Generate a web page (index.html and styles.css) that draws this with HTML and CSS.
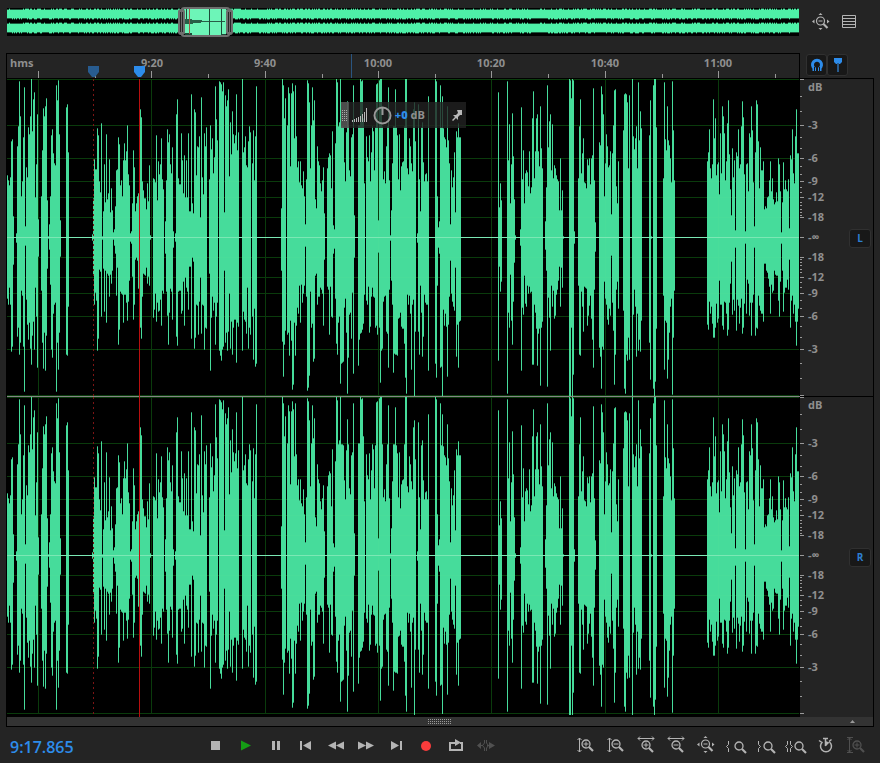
FILE: index.html
```html
<!DOCTYPE html>
<html lang="en">
<head>
<meta charset="utf-8">
<title>Waveform editor</title>
<link rel="stylesheet" href="styles.css">
</head>
<body>
<svg class="symbols" aria-hidden="true">
  <symbol id="lens" viewBox="0 0 13 13"><circle cx="5" cy="5" r="4" fill="none" stroke="currentColor" stroke-width="1.3"/><path d="M8 8l4 4" stroke="currentColor" stroke-width="2.2"/></symbol>
  <symbol id="vertical" viewBox="0 0 5 16"><path d="M2.5 1v14M.5 3l2-2 2 2M.5 13l2 2 2-2" fill="none" stroke="currentColor"/></symbol>
  <symbol id="horizontal" viewBox="0 0 18 5"><path d="M1 2.500h16M3 .5l-2 2 2 2M15 .5l2 2-2 2" fill="none" stroke="currentColor"/></symbol>
  <symbol id="full" viewBox="0 0 18 18"><circle cx="8.500" cy="8" r="4" fill="none" stroke="currentColor" stroke-width="1.200"/><path d="M11.500 11l4 4" stroke="currentColor" stroke-width="2.200"/><path d="M6.500 8h4" stroke="currentColor"/><path d="M8.500 0l2 2h-4zM8.500 17l-2-2h4zM0 8.500l2.500-2v4zM17.500 8.500l-2.500-2v4z" fill="currentColor"/></symbol>
</svg>

<header class="overview-row">
  <svg id="overview" class="overview" viewBox="0 0 793 32" preserveAspectRatio="none" role="img" aria-label="Overview"></svg>
  <div class="overview-tools">
    <button class="tool" aria-label="Zoom out full"><svg width="18" height="18"><use href="#full"/></svg></button>
    <button class="tool" aria-label="Show list"><svg width="14" height="14" fill="none" stroke="currentColor"><path d="M.5.5h13v12H.5zM0 3.500h14M0 6.500h14M0 9.500h14"/></svg></button>
  </div>
</header>

<main class="editor">
  <div class="ruler-row">
    <div class="ruler">
      <svg id="ruler-marks" class="ruler-marks" viewBox="0 0 793 24" preserveAspectRatio="none" aria-hidden="true"></svg>
      <div class="ruler-labels">
        <span class="unit">hms</span><span>9:20</span><span>9:40</span><span>10:00</span><span>10:20</span><span>10:40</span><span>11:00</span>
      </div>
      <svg class="ruler-marks ruler-pins" viewBox="0 0 793 24" preserveAspectRatio="none" aria-hidden="true">
        <path d="M81 12h11v6l-4 5h-3l-4-5z" fill="#285c90"/><path d="M127 12h11v6l-4 5h-3l-4-5z" fill="#2d8ceb"/>
      </svg>
    </div>
    <div class="toggles">
      <button class="toggle" aria-label="Snapping" aria-pressed="true"><svg width="14" height="14" fill="none" stroke="currentColor" stroke-width="3"><path d="M2.500 11.500h2v-1A4.500 4.500 0 1 1 9.500 10.500v1h2"/><path d="M4.500 9v5M9.500 9v5" stroke="#181818" stroke-width="1"/></svg></button>
      <button class="toggle" aria-label="Marker" aria-pressed="true"><svg width="14" height="16"><path d="M3 1h8v4L9 7H5L3 5z" fill="currentColor"/><path d="M7 6v9" stroke="#285c90" stroke-width="2"/></svg></button>
    </div>
  </div>

  <div class="channels">
    <section class="channel">
      <svg class="plot" data-height="318" viewBox="0 0 793 318" preserveAspectRatio="none" role="img" aria-label="Left channel"></svg>
      <div class="scale">
        <svg class="ticks" data-height="318" viewBox="0 0 5 318" preserveAspectRatio="none" aria-hidden="true"></svg>
        <div class="levels"><span>dB</span><span>-3</span><span>-6</span><span>-9</span><span>-12</span><span>-18</span><span>-∞</span><span>-18</span><span>-12</span><span>-9</span><span>-6</span><span>-3</span></div>
        <button class="side" aria-pressed="true">L</button>
      </div>
    </section>
    <section class="channel">
      <svg class="plot" data-height="320" viewBox="0 0 793 320" preserveAspectRatio="none" role="img" aria-label="Right channel"></svg>
      <div class="scale">
        <svg class="ticks" data-height="320" viewBox="0 0 5 320" preserveAspectRatio="none" aria-hidden="true"></svg>
        <div class="levels"><span>dB</span><span>-3</span><span>-6</span><span>-9</span><span>-12</span><span>-18</span><span>-∞</span><span>-18</span><span>-12</span><span>-9</span><span>-6</span><span>-3</span></div>
        <button class="side" aria-pressed="true">R</button>
      </div>
    </section>
    <div class="hud">
      <span class="grip"><svg width="5" height="12"><path d="M.5 1v11M2.500 1v11M4.500 1v11" stroke="#aaa" stroke-dasharray="1 1"/></svg></span>
      <svg width="16" height="16" shape-rendering="crispEdges"><path d="M.5 13v2M2.500 12v3M4.500 11v4M6.500 10v5M8.500 9v6M10.500 7v8M12.500 5v10M14.500 1v14" stroke="#b8b8b8"/></svg>
      <svg class="knob" width="19" height="19" fill="none" stroke="#999" stroke-width="2"><circle cx="9.500" cy="9.500" r="8"/><path d="M9.500 2v7"/></svg>
      <span class="gain"><b>+0</b> dB</span>
      <button class="pin" aria-label="Pin"><svg width="10" height="12" fill="currentColor"><path d="M5 1h5v5L8 6 6 8v3L4 9l-3 3-1-1 3-3-2-2h3l2-2z"/></svg></button>
    </div>
  </div>
  <div class="splitter">
    <svg class="splitter-grip" width="24" height="5"><path d="M0 .5h24M0 2.500h24M0 4.500h24" stroke="#999" stroke-dasharray="1 1"/></svg>
    <svg class="splitter-arrow" width="5" height="3"><path d="M0 3l2.500-3L5 3z" fill="#999"/></svg>
  </div>
</main>

<footer class="transport">
  <output class="time">9:17.865</output>
  <div class="group">
    <button class="tool" aria-label="Stop"><svg width="16" height="12"><path d="M3 2h9v9H3z" fill="currentColor"/></svg></button>
    <button class="tool play" aria-label="Play"><svg width="16" height="12"><path d="M3 1.500l10 5-10 5z" fill="currentColor"/></svg></button>
    <button class="tool" aria-label="Pause"><svg width="16" height="12"><path d="M4 2h3v9H4zM9 2h3v9H9z" fill="currentColor"/></svg></button>
    <button class="tool" aria-label="Previous"><svg width="16" height="12"><path d="M2 2h2v9H2zM13 2v9L5 6.500z" fill="currentColor"/></svg></button>
    <button class="tool" aria-label="Rewind"><svg width="16" height="12"><path d="M8 2.500v8L0 6.500zM16 2.500v8L8 6.500z" fill="currentColor"/></svg></button>
    <button class="tool" aria-label="Fast forward"><svg width="16" height="12"><path d="M0 2.500v8l8-4zM8 2.500v8l8-4z" fill="currentColor"/></svg></button>
    <button class="tool" aria-label="Next"><svg width="16" height="12"><path d="M3 2v9l8-4.500zM12 2h2v9h-2z" fill="currentColor"/></svg></button>
    <button class="tool record" aria-label="Record"><svg width="16" height="12"><circle cx="8" cy="7" r="5" fill="currentColor"/></svg></button>
    <button class="tool" aria-label="Loop"><svg width="16" height="12"><path d="M5 4H2v7h12V4h-2" fill="none" stroke="currentColor" stroke-width="2"/><path d="M4 3h3V0l6 3.500L7 7V5H4z" fill="currentColor"/></svg></button>
    <button class="tool" aria-label="Skip selection" disabled><svg width="18" height="12"><path d="M0 6.500L4 3v7zM12 3l6 3.500-6 3.500z" fill="currentColor"/><path d="M3 6.500h3M10 6.500h4M7.500 1v3l-2 2.500 2 2.500v3M9.500 1v3l2 2.500-2 2.500v3" fill="none" stroke="currentColor" stroke-width="1"/></svg></button>
  </div>
  <div class="group zoom">
    <button class="tool" aria-label="Zoom in amplitude"><svg width="18" height="18"><use href="#vertical" x="0" y="1" width="5" height="16"/><use href="#lens" x="4" y="3" width="13" height="13"/><path d="M6.500 8h5M9 5.500v5" stroke="currentColor"/></svg></button>
    <button class="tool" aria-label="Zoom out amplitude"><svg width="18" height="18"><use href="#vertical" x="0" y="1" width="5" height="16"/><use href="#lens" x="4" y="3" width="13" height="13"/><path d="M6.500 8h5" stroke="currentColor"/></svg></button>
    <button class="tool" aria-label="Zoom in time"><svg width="18" height="18"><use href="#horizontal" x="0" y="0" width="18" height="5"/><use href="#lens" x="4" y="4" width="13" height="13"/><path d="M6.500 9h5M9 6.500v5" stroke="currentColor"/></svg></button>
    <button class="tool" aria-label="Zoom out time"><svg width="18" height="18"><use href="#horizontal" x="0" y="0" width="18" height="5"/><use href="#lens" x="4" y="4" width="13" height="13"/><path d="M6.500 9h5" stroke="currentColor"/></svg></button>
    <button class="tool" aria-label="Zoom out all"><svg width="18" height="18"><use href="#full"/></svg></button>
    <button class="tool" aria-label="Zoom to in point"><svg width="20" height="18"><path d="M2.500 5v3.500L.5 10.500l2 2V16" fill="none" stroke="currentColor"/><use href="#lens" x="8" y="5" width="13" height="13"/></svg></button>
    <button class="tool" aria-label="Zoom to out point"><svg width="18" height="18"><path d="M1.500 5v3.500l2 2-2 2V16" fill="none" stroke="currentColor"/><use href="#lens" x="6" y="5" width="13" height="13"/></svg></button>
    <button class="tool" aria-label="Zoom to selection"><svg width="22" height="18"><path d="M2.500 5v3.500l-2 2 2 2V16M5.500 5v3.500l2 2-2 2V16" fill="none" stroke="currentColor"/><use href="#lens" x="9" y="5" width="13" height="13"/></svg></button>
    <button class="tool" aria-label="Timer"><svg width="16" height="18" fill="none" stroke="currentColor" stroke-width="1.500"><path d="M11.500 6a5.500 5.500 0 1 1-7 0M5 2.500h5M7.500 2.500V10M1 4.500l3 2M11 5.500l2.500-2"/><path d="M7.500 5v5.500l4-4z" fill="currentColor" stroke="none"/></svg></button>
    <button class="tool" aria-label="Zoom amplitude to fit" disabled><svg width="18" height="18"><path d="M0 1.500h6M0 16.500h6" stroke="currentColor"/><use href="#vertical" x="0" y="1" width="5" height="16"/><use href="#lens" x="5" y="4" width="13" height="13"/><path d="M7.500 9h5M10 6.500v5" stroke="currentColor"/></svg></button>
  </div>
</footer>
<script src="script.js"></script>
</body>
</html>
```
FILE: styles.css
```css
* { box-sizing: border-box; }
body {
  display: flex;
  flex-direction: column;
  min-height: 100vh;
  margin: 0;
  background: #242424;
  color: #8f8f8f;
  font: 700 11px/16px "Open Sans", "Noto Sans", sans-serif;
}
svg { display: block; flex: none; overflow: visible; }
button { margin: 0; padding: 0; border: 0; background: none; color: inherit; font: inherit; }
.symbols { position: absolute; width: 0; height: 0; }

.overview-row {
  display: flex;
  align-items: center;
  padding: 6px 7px 15px;
}
.overview { flex: 1; min-width: 0; height: 32px; shape-rendering: crispEdges; }
.overview-tools { display: flex; width: 73px; gap: 12px; padding-left: 12px; }
.tool { display: flex; align-items: center; justify-content: center; color: #b4b4b4; }
.tool:disabled { color: #505050; }

.editor { display: flex; flex-direction: column; flex: 1; margin: 0 6px; }
.ruler-row { display: flex; }
.ruler {
  position: relative;
  flex: 1;
  height: 26px;
  border: solid #000;
  border-width: 1px 0 1px 1px;
  box-shadow: inset -1px 0 #000;
}
.ruler-marks { position: absolute; inset: 0; width: 100%; height: 24px; shape-rendering: crispEdges; }
.ruler-pins { shape-rendering: auto; }
.ruler-labels {
  display: grid;
  grid-template-columns: 145fr 113fr 113fr 113fr 114fr 113fr 82fr;
  padding-top: 1px;
}
.ruler-labels span { display: flex; justify-content: center; width: 0; }
.ruler-labels .unit { width: auto; justify-content: flex-start; padding-left: 3px; }
.toggles { display: flex; width: 74px; padding: 1px 0 0 6px; border-bottom: 1px solid #000; }
.toggle {
  display: flex;
  align-items: center;
  justify-content: center;
  width: 21px;
  height: 22px;
  border: 1px solid #303030;
  border-radius: 3px;
  background: #181818;
  color: #2d8ceb;
}

.channels {
  position: relative;
  display: grid;
  grid-template-columns: minmax(0, 1fr);
  grid-template-rows: 318fr 320fr;
  flex: 1;
  border: solid #000;
  border-width: 0 1px;
}
.channel { display: flex; min-height: 200px; }
.plot { flex: 1; min-width: 0; contain: size; background: #000; shape-rendering: crispEdges; }
.scale { position: relative; display: flex; align-items: center; width: 73px; }
.channel:first-child .scale { box-shadow: inset 0 -1px #000; }
.ticks { align-self: stretch; width: 5px; contain: size; shape-rendering: crispEdges; }
.levels {
  display: grid;
  flex: 1;
  align-self: stretch;
  padding: 8px 0 0 3px;
  grid-template-rows: 38fr 33fr 23fr 16fr 20fr 20fr 20fr 20fr 16fr 23fr 33fr 48fr;
}
.channel:nth-child(2) .levels { grid-template-rows: 38fr 33fr 23fr 16fr 20fr 20fr 20fr 20fr 16fr 23fr 33fr 50fr; }
.levels span { height: 0; line-height: 0; }
.side {
  width: 22px;
  height: 19px;
  margin-right: 2px;
  border: 1px solid #303030;
  border-radius: 3px;
  background: #181818;
  color: #2d7fd0;
  font-size: 10px;
}

.hud {
  position: absolute;
  top: 23px;
  left: 42%;
  display: flex;
  align-items: center;
  width: 125px;
  height: 26px;
  margin-left: -30px;
  background: rgba(34, 34, 34, .8);
}
.grip { display: flex; align-items: center; justify-content: center; width: 8px; height: 26px; margin-right: 3px; background: rgba(110, 110, 110, .6); }
.knob { margin: 0 3px 0 5px; }
.gain { flex: 1; white-space: nowrap; }
.gain b { color: #2d8ceb; }
.pin { margin: 0 4px 0 8px; color: #b8b8b8; }

.splitter {
  display: grid;
  grid-template-columns: 1fr auto 1fr;
  align-items: center;
  height: 10px;
  border: solid #000;
  border-width: 0 1px 1px;
  background: #333;
}
.splitter-grip { grid-column: 2; }
.splitter-arrow { justify-self: end; margin-right: 18px; }

.transport { display: flex; align-items: center; height: 36px; padding: 0 9px 0 10px; }
.time { width: 191px; margin-top: 4px; color: #2d8ceb; font-size: 16px; font-weight: 600; line-height: 20px; }
.group { display: flex; }
.group .tool { width: 30px; height: 30px; }
.zoom { margin-left: auto; }
.group .play { color: #159c15; }
.group .record { color: #f93c3c; }
```
FILE: script.js
```js
// Peak heights above/below the zero line, one pair per column; the key is the first column.
const peaks = {
  7: "62/61 57/67 52/50 60/67 96/114 98/109 21/27 0/0 0/0 4/5 91/99 111/90 156/117 121/105 41/53 56/58 100/109 150/154 11/8 70/62 60/87 110/102 103/85 121/111 158/127 106/98 138/84 145/112 40/50 73/79 123/130 18/19 0/0 0/0 41/53 87/105 129/131 121/95 131/133 139/98 37/31 1/1 13/12 41/47 102/112 108/120 84/76 74/67 72/65 152/154 137/105 157/132 103/95 17/19",
  66: "130/117 133/118 85/69",
  92: "3/3 39/37 78/67 68/55 68/63 109/113 102/101 56/32 45/34 114/79 1/2 26/31 73/74 35/33 103/85 38/36 44/38 78/59 25/37 49/46 27/33 5/2 8/8 31/16 67/58 68/30 100/107 93/92 52/54 57/56 41/57 77/85 94/57 77/57 86/65 112/83 63/64 52/43 4/4 6/6 34/39 87/82 70/67 26/22 34/20 41/23 44/51 45/69 128/90 120/101 56/59 47/36 39/37 39/38 28/30 54/46 36/39 72/48 2/2",
  153: "59/80 58/72 55/56 102/84 37/65 76/74 63/73 73/62 99/88 58/53 48/56 0/0 16/16 57/54 108/78 95/107 103/75 73/51 64/54 90/82 6/10 0/0 4/4 123/99 138/108 59/54 53/53 53/53 104/76 77/73 44/44 82/88 40/40 77/50 40/54 104/72 26/29 26/29 143/101 34/20 24/24 128/111 125/100 62/67 91/68 90/97 101/64 20/40 140/96 60/67 43/68 104/112 91/90 110/91",
  209: "58/36 112/133 88/80 99/59 64/73 80/65 151/107 118/79 97/65 0/0 156/113 155/118 153/123 146/112 155/109 25/33 142/105 131/95 137/113 148/94 61/56 115/111 83/84 126/117 103/90 94/82 102/82 143/125 87/85 105/89",
  242: "158/113 85/74 90/82 101/84 72/96 70/50 96/111 111/90 105/97 0/0 74/79 107/122 57/71 101/129 151/126",
  281: "29/33 158/104 152/139 119/107 139/93 0/0 112/97 150/95 144/118 71/83 144/103 154/152 146/147 99/85 152/118 101/88 70/70 76/76 55/48 76/85 52/47 49/65 66/56 41/48 13/9 58/59 157/153 154/150 135/138 69/54 112/90 150/86 117/124 137/121 38/38 29/36 91/67 76/59 72/59 54/50 46/52 57/56 70/88 24/22",
  327: "69/49 80/52 84/97 82/49 49/79 106/80 12/16 8/11 94/61 158/106 155/117 111/85 115/79 158/146 111/126 111/125 110/124 75/70 56/61 105/95 136/156 111/120 67/77 61/75 100/101 103/55 152/136 22/20",
  358: "112/128 112/102 158/96 156/95 157/92 119/86 54/57 0/0 101/63 80/67 76/49 102/95 56/89 85/59 111/50 106/59 67/60 110/90 153/88 154/97 17/15 157/90 158/145 158/113 111/111 58/64 66/59 54/58 91/94 111/96 150/130 57/52 2/3 27/43 74/67 111/135 111/116 148/117 110/117 102/118 58/81 103/80 47/75 71/89 75/91 76/91 111/106 158/140 158/156 69/57 63/67 99/58 91/76 74/132 66/67 128/62 135/159 96/94 0/0 4/5 133/94 58/117 26/48 110/75 115/119 75/99 56/57 63/65 64/67 56/67 141/133",
  435: "158/126 156/140 41/48 10/10 16/16 152/130 110/129 141/158 109/72 100/88 98/76 90/89 131/139 97/87 74/59 13/23 67/56 50/64 60/69 85/73 25/30 106/119 100/87 114/130 100/84 100/83",
  498: "145/123 30/29 54/54 37/44",
  507: "156/156 77/75 113/90 34/37 73/83 124/107 81/64 38/25 2/2",
  520: "8/8 130/133 58/70 87/77 34/38 64/66 67/69 65/48 51/56 86/49 44/55 50/54 119/127 146/127 59/67 86/75 119/91 123/128 86/96 71/91 131/148 89/90 69/84 0/0 0/0 16/12 50/33 152/149 90/60 116/80 123/113 67/48 113/69 59/53 72/81 69/78 62/57 58/52 56/43 27/29 79/69 27/30 47/50 1/1",
  569: "158/159 157/159 139/90 158/159 157/137 6/6",
  578: "59/48 111/117 138/118 64/54 84/69 99/94 55/49 54/50 49/51 78/88 72/78 79/68 53/58 79/81 82/102 149/130 57/52 15/14",
  599: "95/110 92/119 151/151 143/109 123/112 41/44 74/61 103/67 91/82 70/87 72/71 86/78 23/18 84/65 112/93 147/147 148/117 51/52 34/44 76/71",
  623: "107/73 143/151 144/156 143/117 135/123 69/100 142/122 0/0 0/0 158/159 101/77 88/52 99/69 111/119 69/76 155/113 97/102 126/114 109/83",
  649: "102/105 137/142 1/1 0/0 152/151 158/159 158/144 110/91",
  663: "59/58 155/132 98/83 87/85 131/141 97/122 92/95 79/69 55/61 156/157 107/100 57/53",
  707: "76/87 85/92 108/64 69/76 59/69 73/86 138/100 99/100 119/90 62/66 73/85 75/81 43/43 104/67 64/67 131/88 121/92 104/64 57/65 76/76 114/98 137/92 83/65 48/46 22/24 89/77 60/62 77/73 7/10 85/93 81/62 108/68 69/86 73/70 111/61 136/96 120/90 63/66 6/6 73/76 74/42 46/46 104/78 100/65 131/98 107/65 55/57 11/10 85/98 137/90 133/91 96/58 49/68 90/73 67/76 67/76 76/84 28/26 31/26 29/33 40/35 41/41 57/49 76/76 46/47 59/55 38/53 33/33 35/37 45/38 36/38 79/63 73/79 46/44 5/6 35/33 75/74 48/55 57/50 48/50 46/42 58/52 9/22 82/90 78/63 108/58 64/76 54/67 101/84 128/108 84/84 84/71"
};
const origin = 7;
const majorX = [31, 144, 258, 371, 484, 598, 711];
const minorX = [88, 201, 315, 428, 541, 655, 768];
const majorY = [0, 46, 79, 102, 118, 138, 158, 178, 198, 214, 237, 270, 316];
const minorY = [17, 32, 58, 69, 87, 95, 108, 113, 123, 126, 130, 133, 136];

const box = (x, y, w, h) => `M${x} ${y}h${w}v${h}h${-w}z`;
const fill = (d, colour, extra = "") => `<path d="${d}" fill="${colour}" ${extra}/>`;

let body = "", tips = "";
for (const [start, list] of Object.entries(peaks)) {
  list.split(" ").forEach((pair, i) => {
    const [up, down] = pair.split("/").map(Number);
    const x = Number(start) - origin + i;
    if (!up && !down) return;
    body += box(x, 158 - up, 1, up + down + 1);
    if (up < 158) tips += box(x, 158 - up, 1, 1);
    if (down < 158) tips += box(x, 158 + down, 1, 1);
  });
}

document.querySelectorAll(".plot").forEach(svg => {
  const h = Number(svg.dataset.height);
  const rows = majorY.map(y => box(0, y, 792, 1)).join("");
  const cols = majorX.map(x => box(x, 0, 1, 317)).join("");
  let out = fill(rows + cols, "#032e03") + fill(body, "#46dc9b") + fill(tips, "#2c9468");
  out += fill(rows + cols, "#70f090", 'opacity=".07"');
  out += fill(box(0, 158, 792, 1), "#7be8b4");
  if (h === 318) out += fill(box(0, 317, 793, 1), "#858585");
  out += fill(box(132, 0, 1, h), "#b90f0f");
  out += `<path d="M86.500 0v${h}" stroke="#7c1414" stroke-dasharray="2 3"/>`;
  svg.innerHTML = out;
});

document.querySelectorAll(".ticks").forEach(svg => {
  const small = minorY.flatMap(y => [y, 316 - y]);
  svg.innerHTML = fill(majorY.map(y => box(0, y, 4, 1)).join("") + small.map(y => box(0, y, 2, 1)).join(""), "#999");
});

document.getElementById("ruler-marks").innerHTML =
  fill(majorX.map(x => box(x, 17, 1, 7)).join("") + minorX.map(x => box(x, 20, 1, 4)).join(""), "#999") +
  fill(box(344, 0, 1, 24), "#2a5580");

// Overview strip: two dense bands, with the visible range framed.
let seed = 11;
const noise = () => (seed = (seed * 16807) % 2147483647) / 2147483647;
let band = "", edge = "";
for (let x = 0; x < 792; x += 1) {
  const a = 4 + Math.floor(noise() * 1.6), b = 4 + Math.floor(noise() * 1.6);
  for (const c of [8, 22]) {
    band += box(x, c - a, 1, a + b);
    edge += box(x, c - a - 1, 1, 1) + box(x, c + b, 1, 1);
  }
}
document.getElementById("overview").innerHTML =
  fill(box(0, 2, 792, 28), "#000") + fill(edge, "#1d5c40") + fill(band, "#4ef0a8") +
  fill(box(178, 3, 41, 26), "#6df5b8") +
  fill("M178 13h6l2 1h8l2 1h22v1h-22l-4 1h-5l-3 1h-6z", "#285e48") +
  fill(box(179, 3, 1, 10) + box(202, 3, 1, 26) + box(214, 3, 1, 26) + box(178, 27, 7, 2) + box(215, 28, 4, 1), "#1d4938") +
  fill(box(182, 3, 1, 25), "#a05a4a") +
  `<rect x="174.500" y="2" width="48" height="28" rx="3" fill="none" stroke="#6e6e6e" stroke-width="2" shape-rendering="auto"/>
   <g shape-rendering="auto"><rect x="171" y="3" width="7" height="26" rx="3" fill="#6e6e6e"/><rect x="219" y="3" width="7" height="26" rx="3" fill="#6e6e6e"/></g>` +
  fill(box(173, 6, 1, 20) + box(175, 6, 1, 20) + box(221, 6, 1, 20) + box(223, 6, 1, 20), "#282828");
```
